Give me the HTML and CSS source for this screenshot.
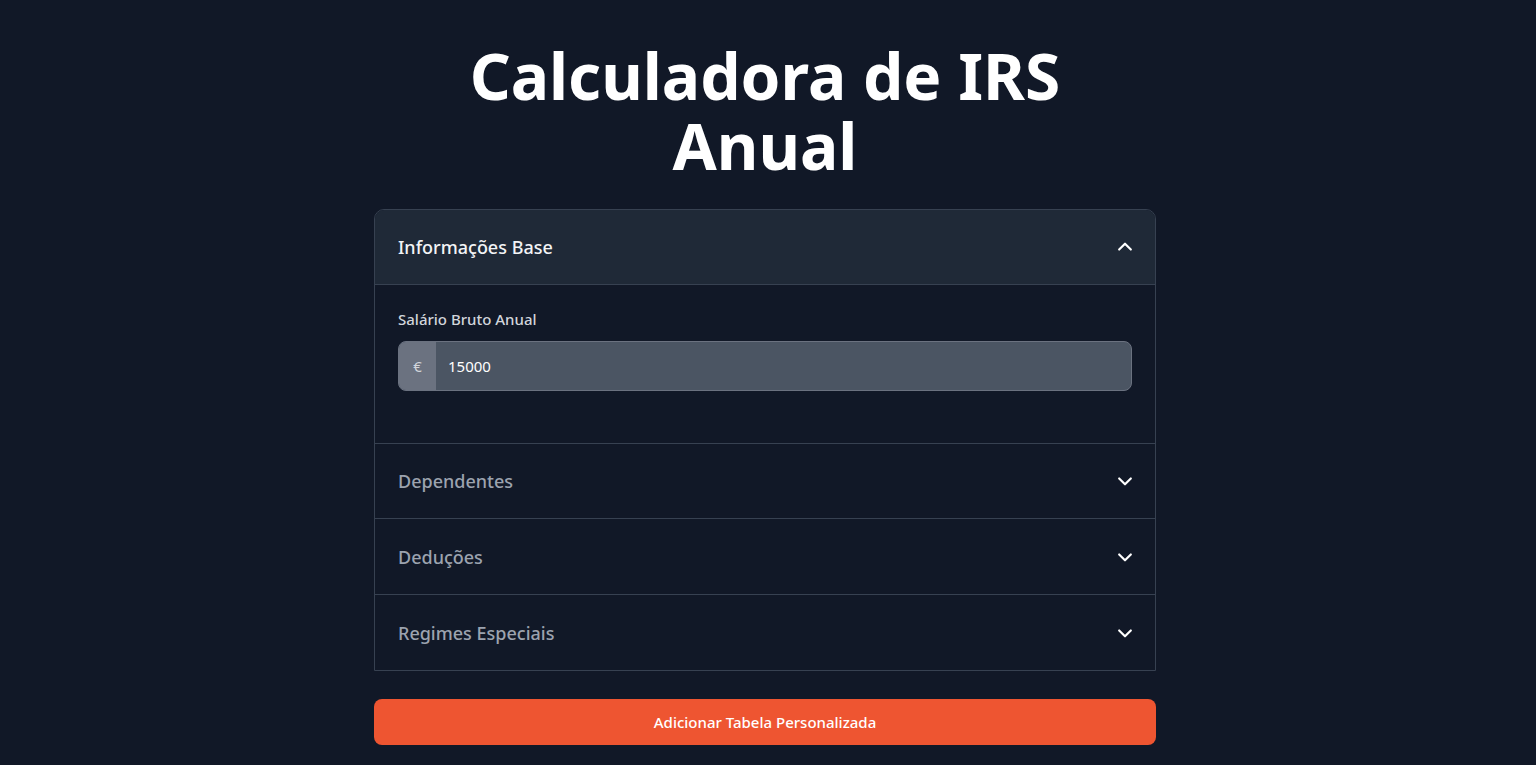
FILE: index.html
```html
<!DOCTYPE html>
<html lang="pt">
<head>
  <meta charset="UTF-8">
  <title>Calculadora de IRS Anual</title>
  <link rel="stylesheet" href="styles.css">
</head>
<body>
  <main class="page">
    <h1 class="title">Calculadora de IRS<br>Anual</h1>

    <div class="accordion">
      <div class="acc-item open">
        <button class="acc-header" type="button">
          <span>Informações Base</span>
          <svg class="chev" viewBox="0 0 24 24" width="20" height="20"><path d="M5 15l7-7 7 7"/></svg>
        </button>
        <div class="acc-body">
          <label class="field-label" for="salario">Salário Bruto Anual</label>
          <div class="input-group">
            <span class="prefix">€</span>
            <input id="salario" type="number" value="15000">
          </div>
        </div>
      </div>

      <div class="acc-item">
        <button class="acc-header" type="button">
          <span>Dependentes</span>
          <svg class="chev" viewBox="0 0 24 24" width="20" height="20"><path d="M5 9l7 7 7-7"/></svg>
        </button>
      </div>

      <div class="acc-item">
        <button class="acc-header" type="button">
          <span>Deduções</span>
          <svg class="chev" viewBox="0 0 24 24" width="20" height="20"><path d="M5 9l7 7 7-7"/></svg>
        </button>
      </div>

      <div class="acc-item">
        <button class="acc-header" type="button">
          <span>Regimes Especiais</span>
          <svg class="chev" viewBox="0 0 24 24" width="20" height="20"><path d="M5 9l7 7 7-7"/></svg>
        </button>
      </div>
    </div>

    <button class="add-btn" type="button">Adicionar Tabela Personalizada</button>
  </main>
</body>
</html>
```

FILE: styles.css
```css
body {
  margin: 0;
  background-color: #111827;
  font-family: "Noto Sans", "Open Sans", sans-serif;
  color: #f3f4f6;
}
.page {
  width: 782px;
  margin: 0 auto;
  padding: 41px 6px 0 0;
}
.title {
  margin: 0 0 28px;
  text-align: center;
  font-size: 64px;
  line-height: 70px;
  font-weight: 700;
  color: #ffffff;
}
.accordion {
  border: 1px solid #374151;
  border-radius: 10px 10px 0 0;
  overflow: hidden;
}
.acc-item + .acc-item {
  border-top: 1px solid #374151;
}
.acc-header {
  width: 100%;
  height: 75px;
  display: flex;
  align-items: center;
  justify-content: space-between;
  padding: 0 20px 0 23px;
  background: transparent;
  border: none;
  font-family: inherit;
  font-size: 18px;
  font-weight: 500;
  color: #9ca3af;
  cursor: pointer;
}
.acc-item.open + .acc-item .acc-header {
  height: 74px;
}
.acc-item.open .acc-header {
  height: 75px;
  background-color: #1f2937;
  color: #f3f4f6;
  border-bottom: 1px solid #374151;
}
.chev {
  fill: none;
  stroke: #ffffff;
  stroke-width: 2.6;
  stroke-linecap: round;
  stroke-linejoin: round;
}
.acc-body {
  padding: 24px 23px 52px;
}
.field-label {
  display: block;
  font-size: 15px;
  font-weight: 500;
  color: #d1d5db;
  margin-bottom: 12px;
}
.input-group {
  display: flex;
  height: 48px;
  border: 1px solid #6b7280;
  border-radius: 8px;
  overflow: hidden;
  background-color: #4b5563;
}
.prefix {
  width: 37px;
  display: flex;
  align-items: center;
  justify-content: center;
  background-color: #6b7280;
  color: #d1d5db;
  font-size: 15px;
}
.input-group input {
  flex: 1;
  border: none;
  background: transparent;
  padding: 0 12px;
  font-family: inherit;
  font-size: 15px;
  color: #ffffff;
  outline: none;
}
.add-btn {
  display: block;
  width: 100%;
  height: 46px;
  margin-top: 28px;
  border: none;
  border-radius: 8px;
  background-color: #ee5531;
  color: #ffffff;
  font-family: inherit;
  font-size: 15px;
  font-weight: 500;
  cursor: pointer;
}
```
